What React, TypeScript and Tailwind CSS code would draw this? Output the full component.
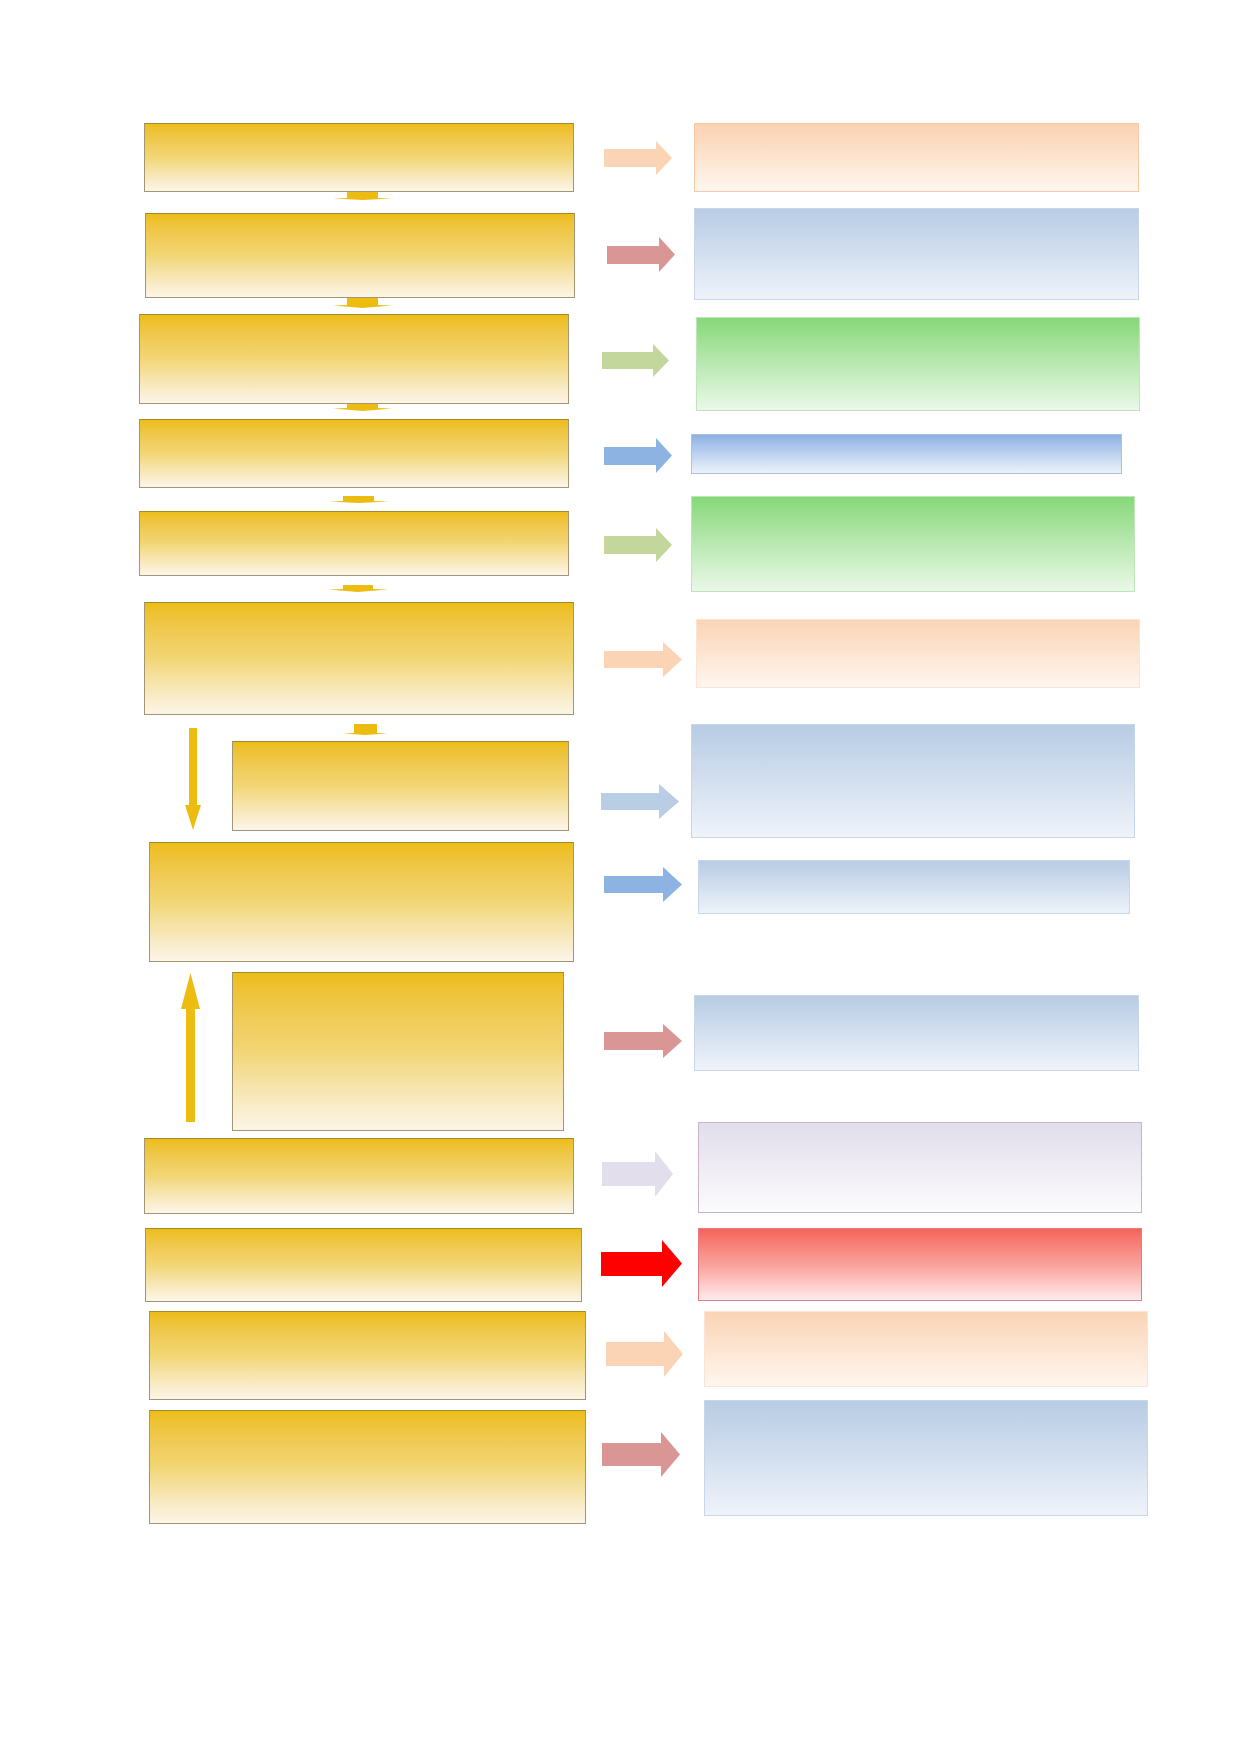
import React from "react";

const Y = "shrink-0 bg-linear-to-b from-[#edbd12] via-[#f2d674] to-[#fcf5e9] border border-[#a59570] border-t-[#a08a34]";
const PEACH = "shrink-0 bg-linear-to-b from-[#fad2b1] to-[#fff6ef] border border-[#f5c9a6]";
const PEACH2 = "shrink-0 bg-linear-to-b from-[#fad4b5] to-[#fff6ef] border border-[#fbe4d3]";
const BLUE = "shrink-0 bg-linear-to-b from-[#b8cce4] to-[#eff3fa] border border-[#c8d6ea]";
const BLUE2 = "shrink-0 bg-linear-to-b from-[#8db2e2] to-[#edf2fa] border border-[#a8c1e4]";
const GREEN = "shrink-0 bg-linear-to-b from-[#86d878] to-[#eaf8e8] border border-[#bfe5b8]";
const LAV = "shrink-0 bg-linear-to-b from-[#e2ddeb] to-[#fcfbfd] border border-[#c9b2c3]";
const RED = "shrink-0 bg-linear-to-b from-[#f5645a] via-[#f8a09c] to-[#fdebec] border border-[#e57b85]";

function Connector({
  className,
  w,
  h,
  s1,
  s2,
  sh,
}: {
  className: string;
  w: number;
  h: number;
  s1: number;
  s2: number;
  sh: number;
}) {
  const mid = (s1 + s2) / 2;
  const pts = `${s1},0 ${s2},0 ${s2},${sh} ${w},${sh + 0.6} ${mid},${h} 0,${sh + 0.6} ${s1},${sh}`;
  return (
    <svg className={"shrink-0 block " + className} width={w} height={h} viewBox={`0 0 ${w} ${h}`}>
      <polygon points={pts} fill="#ecbd10" />
    </svg>
  );
}

function Arrow({
  className,
  w,
  h,
  s1,
  s2,
  hs,
  c,
}: {
  className: string;
  w: number;
  h: number;
  s1: number;
  s2: number;
  hs: number;
  c: string;
}) {
  const pts = `0,${s1} ${hs},${s1} ${hs},0 ${w},${h / 2} ${hs},${h} ${hs},${s2} 0,${s2}`;
  return (
    <svg className={"shrink-0 block " + className} width={w} height={h} viewBox={`0 0 ${w} ${h}`}>
      <polygon points={pts} fill={c} />
    </svg>
  );
}

export default function App() {
  return (
    <div className="w-[1239px] h-[1752px] bg-white overflow-hidden flex items-start font-['Liberation_Sans',sans-serif]">
      {/* left column: process boxes */}
      <div className="ml-[139px] w-[447px] flex flex-col items-start shrink-0">
        <div className={Y + " mt-[123px] ml-[5px] w-[430px] h-[69px]"} />
        <Connector className="ml-[194px]" w={59} h={8} s1={14} s2={45} sh={6} />
        <div className={Y + " mt-[13px] ml-[6px] w-[430px] h-[85px]"} />
        <Connector className="ml-[194px]" w={59} h={10} s1={14} s2={45} sh={7} />
        <div className={Y + " mt-[6px] w-[430px] h-[90px]"} />
        <Connector className="ml-[194px]" w={59} h={7} s1={14} s2={45} sh={4} />
        <div className={Y + " mt-[8px] w-[430px] h-[69px]"} />
        <Connector className="mt-[8px] ml-[190px]" w={60} h={7} s1={14} s2={45} sh={5} />
        <div className={Y + " mt-[8px] w-[430px] h-[65px]"} />
        <Connector className="mt-[9px] ml-[189px]" w={60} h={7} s1={15} s2={45} sh={4} />
        <div className={Y + " mt-[10px] ml-[5px] w-[430px] h-[113px]"} />
        <Connector className="mt-[9px] ml-[204px]" w={44} h={11} s1={11} s2={34} sh={9} />
        <div className="flex items-start">
          <svg className="shrink-0 block -mt-[7px] ml-[46px]" width="16" height="102" viewBox="0 0 16 102">
            <polygon points="4,0 12,0 12,77 16,77 8,102 0,77 4,77" fill="#ecbd10" />
          </svg>
          <div className={Y + " mt-[6px] ml-[31px] w-[337px] h-[90px]"} />
        </div>
        <div className={Y + " mt-[11px] ml-[10px] w-[425px] h-[120px]"} />
        <div className="flex items-start mt-[10px]">
          <svg className="shrink-0 block mt-[1px] ml-[42px]" width="19" height="149" viewBox="0 0 19 149">
            <polygon points="9.5,0 19,36 14,36 14,149 5,149 5,36 0,36" fill="#ecbd10" />
          </svg>
          <div className={Y + " ml-[32px] w-[332px] h-[159px]"} />
        </div>
        <div className={Y + " mt-[7px] ml-[5px] w-[430px] h-[76px]"} />
        <div className={Y + " mt-[14px] ml-[6px] w-[437px] h-[74px]"} />
        <div className={Y + " mt-[9px] ml-[10px] w-[437px] h-[89px]"} />
        <div className={Y + " mt-[10px] ml-[10px] w-[437px] h-[114px]"} />
      </div>

      {/* middle column: arrows */}
      <div className="ml-[14px] w-[84px] flex flex-col items-start shrink-0">
        <Arrow className="mt-[141px] ml-[4px]" w={68} h={34} s1={8} s2={26} hs={52} c="#fad4b4" />
        <Arrow className="mt-[62px] ml-[7px]" w={68} h={35} s1={9} s2={27} hs={52} c="#d99694" />
        <Arrow className="mt-[72px] ml-[2px]" w={67} h={33} s1={8} s2={25} hs={51} c="#c3d69b" />
        <Arrow className="mt-[61px] ml-[4px]" w={68} h={35} s1={9} s2={27} hs={52} c="#8db3e2" />
        <Arrow className="mt-[55px] ml-[4px]" w={68} h={34} s1={8} s2={26} hs={52} c="#c3d69b" />
        <Arrow className="mt-[80px] ml-[4px]" w={78} h={35} s1={9} s2={26} hs={59} c="#fad4b4" />
        <Arrow className="mt-[107px] ml-[1px]" w={78} h={35} s1={9} s2={26} hs={58} c="#b9cde5" />
        <Arrow className="mt-[48px] ml-[4px]" w={78} h={35} s1={9} s2={26} hs={59} c="#8db3e2" />
        <Arrow className="mt-[122px] ml-[4px]" w={78} h={34} s1={8} s2={26} hs={59} c="#d99694" />
        <Arrow className="mt-[93px] ml-[2px]" w={71} h={46} s1={11} s2={35} hs={53} c="#e2deec" />
        <Arrow className="mt-[43px] ml-[1px]" w={81} h={47} s1={12} s2={36} hs={61} c="#ff0000" />
        <Arrow className="mt-[44px] ml-[6px]" w={77} h={46} s1={11} s2={35} hs={58} c="#fad4b4" />
        <Arrow className="mt-[55px] ml-[2px]" w={78} h={45} s1={11} s2={34} hs={59} c="#d99694" />
      </div>

      {/* right column: result boxes */}
      <div className="ml-[7px] w-[460px] flex flex-col items-start shrink-0">
        <div className={PEACH + " mt-[123px] ml-[3px] w-[445px] h-[69px]"} />
        <div className={BLUE + " mt-[16px] ml-[3px] w-[445px] h-[92px]"} />
        <div className={GREEN + " mt-[17px] ml-[5px] w-[444px] h-[94px]"} />
        <div className={BLUE2 + " mt-[23px] w-[431px] h-[40px]"} />
        <div className={GREEN + " mt-[22px] w-[444px] h-[96px]"} />
        <div className={PEACH2 + " mt-[27px] ml-[5px] w-[444px] h-[69px]"} />
        <div className={BLUE + " mt-[36px] w-[444px] h-[114px]"} />
        <div className={BLUE + " mt-[22px] ml-[7px] w-[432px] h-[54px]"} />
        <div className={BLUE + " mt-[81px] ml-[3px] w-[445px] h-[76px]"} />
        <div className={LAV + " mt-[51px] ml-[7px] w-[444px] h-[91px]"} />
        <div className={RED + " mt-[15px] ml-[7px] w-[444px] h-[73px]"} />
        <div className={PEACH2 + " mt-[10px] ml-[13px] w-[444px] h-[76px]"} />
        <div className={BLUE + " mt-[13px] ml-[13px] w-[444px] h-[116px]"} />
      </div>
    </div>
  );
}
